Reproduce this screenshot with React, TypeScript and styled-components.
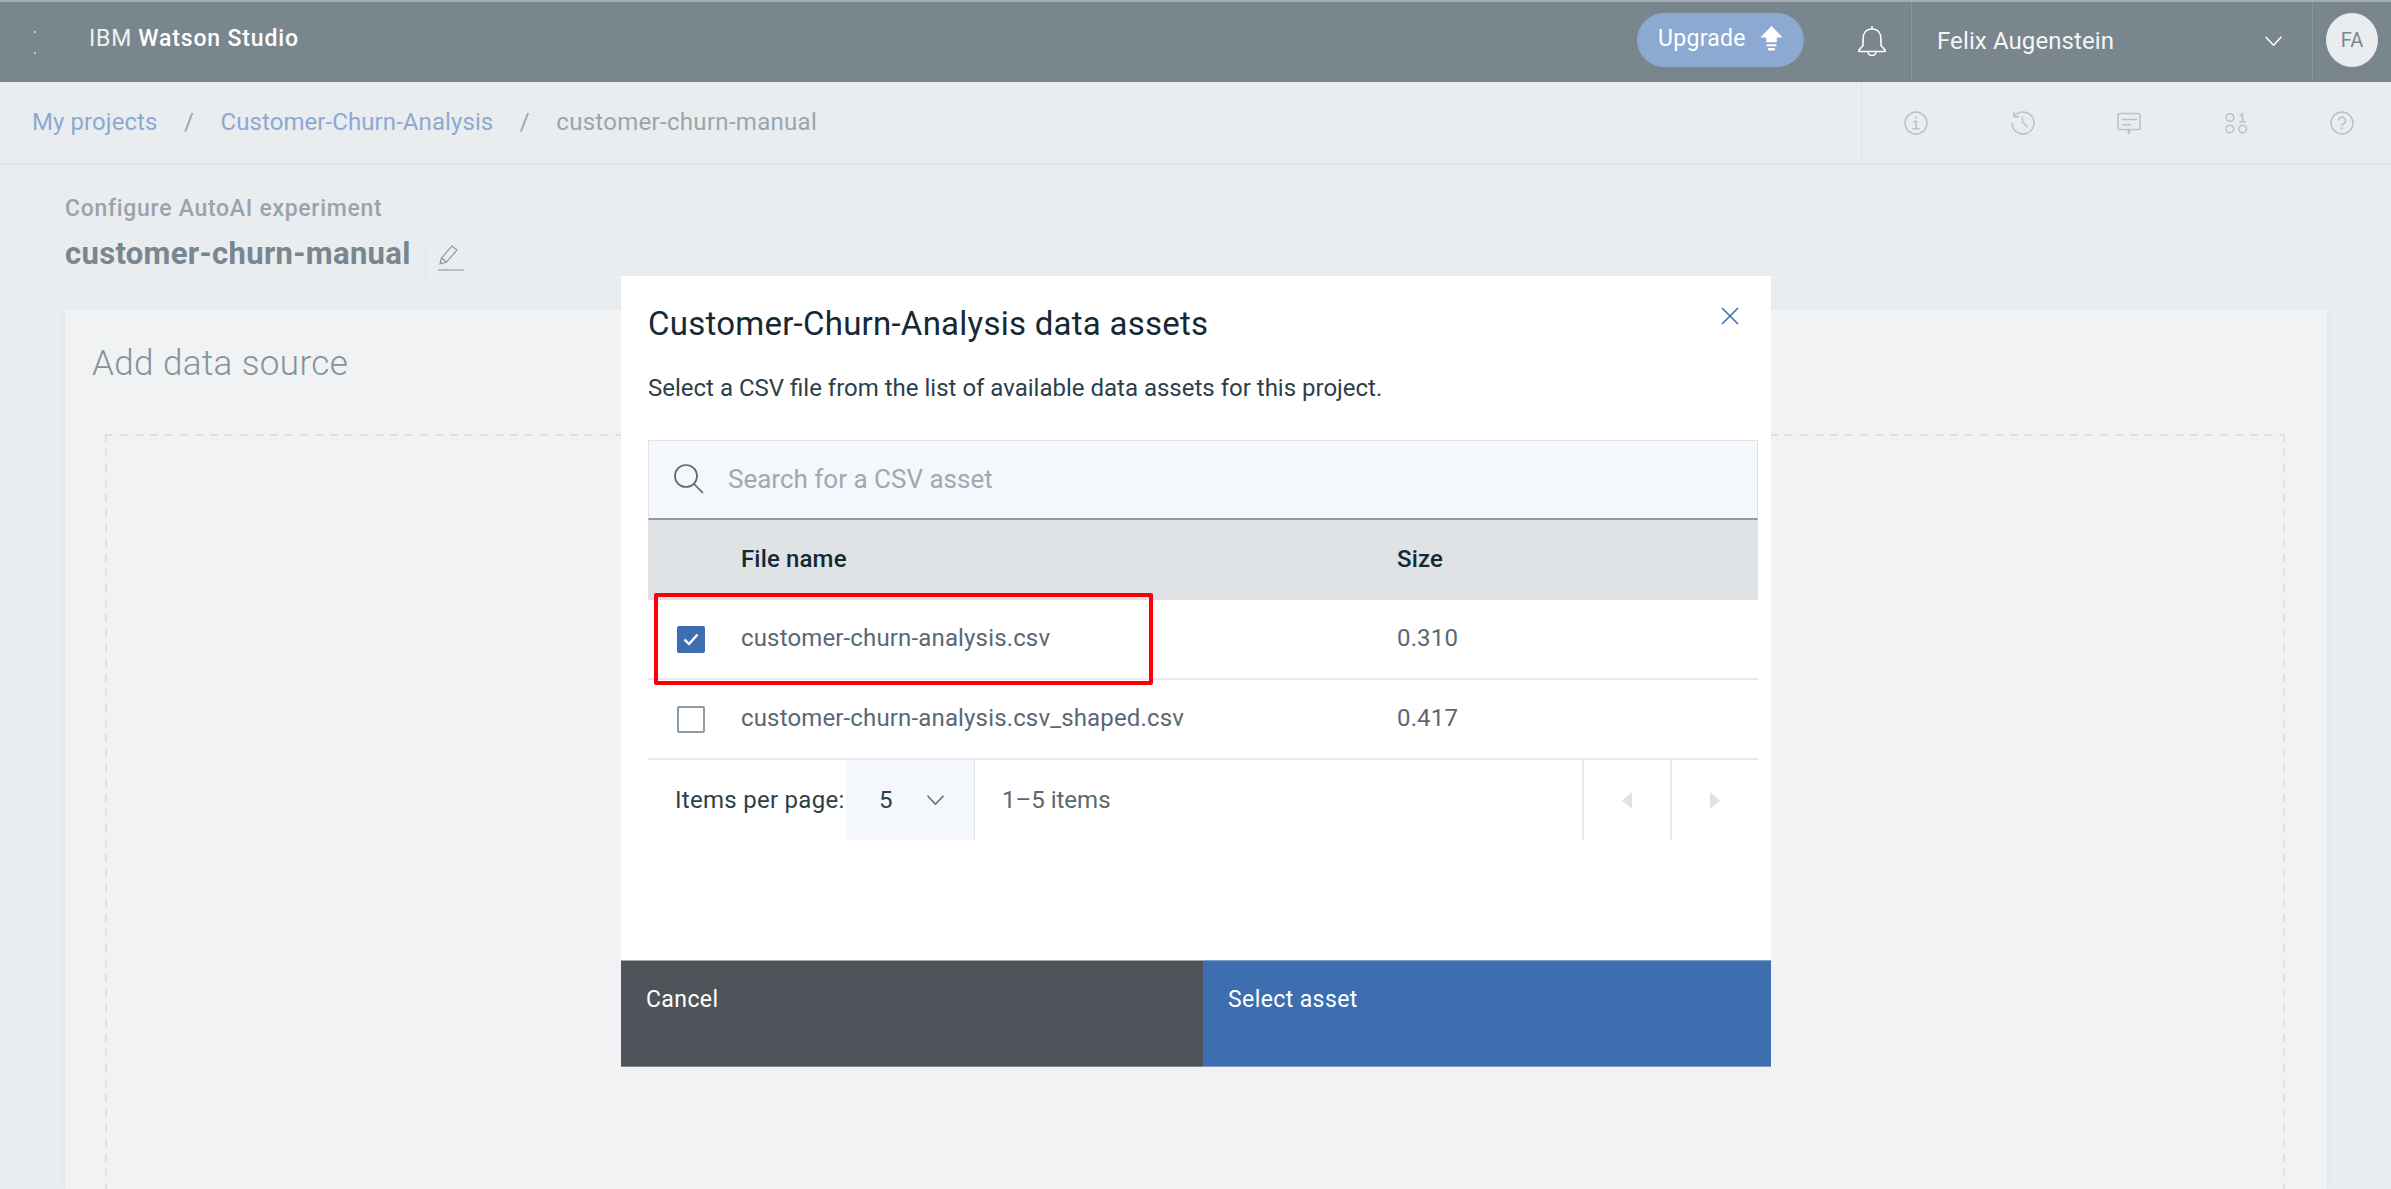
import React from 'react';
import styled, { createGlobalStyle } from 'styled-components';

const GlobalStyle = createGlobalStyle`
  html, body {
    margin: 0;
    padding: 0;
    height: 100%;
    background: #e9edf0;
    font-family: Roboto, "Noto Sans", sans-serif;
  }
  * { box-sizing: border-box; }
`;

const Page = styled.div`
  position: relative;
  height: 1189px;
  overflow: hidden;
  display: flex;
  flex-direction: column;
  background: #e9edf0;
`;

const TopBar = styled.header`
  height: 82px;
  flex: none;
  display: flex;
  align-items: stretch;
  background: #7a868d;
  border-top: 2px solid #a3acb1;
  color: #fff;
`;

const LogoMark = styled.div`
  width: 89px;
  flex: none;
  display: flex;
  flex-direction: column;
  justify-content: center;
  gap: 19px;
  padding-left: 34px;
`;

const LogoDot = styled.span`
  width: 2px;
  height: 2px;
  background: #c4cbcf;
`;

const Brand = styled.div`
  flex: 1;
  display: flex;
  align-items: center;
  gap: 6px;
  font-size: 23px;
  letter-spacing: 0.85px;
  padding-bottom: 8px;
  color: #eef1f2;
`;

const BrandStrong = styled.span`
  font-weight: 500;
  color: #fff;
`;

const Upgrade = styled.div`
  width: 167px;
  height: 54px;
  margin-top: 11px;
  border-radius: 27px;
  background: #8ca9d1;
  display: flex;
  align-items: center;
  gap: 14px;
  padding: 0 0 4px 21px;
  font-size: 23px;
  letter-spacing: 0.3px;
`;

const BellSlot = styled.div`
  width: 107px;
  flex: none;
  display: flex;
  align-items: center;
  justify-content: center;
  padding: 0 0 2px 28px;
`;

const UserMenu = styled.div`
  width: 402px;
  flex: none;
  display: flex;
  align-items: center;
  justify-content: space-between;
  padding: 0 30px 2px 25px;
  font-size: 24px;
  letter-spacing: 0.1px;
  border-left: 1px solid #8a959b;
  border-right: 1px solid #8a959b;
  color: #f3f5f6;
`;

const AvatarSlot = styled.div`
  width: 78px;
  flex: none;
  display: flex;
  align-items: flex-start;
  padding: 11px 0 0 13px;
`;

const Avatar = styled.div`
  width: 52px;
  height: 54px;
  border-radius: 50%;
  background: #e9edf0;
  color: #7a868d;
  display: flex;
  align-items: center;
  justify-content: center;
  font-size: 20px;
`;

const SubBar = styled.nav`
  height: 83px;
  flex: none;
  display: flex;
  justify-content: space-between;
  border-bottom: 2px solid #e1e5e8;
`;

const Crumbs = styled.div`
  display: flex;
  align-items: center;
  padding: 0 0 2px 32px;
  font-size: 24px;
`;

const Crumb = styled.span<{ $link?: boolean }>`
  color: ${(p) => (p.$link ? '#8ea9d0' : '#9aa5ab')};
  letter-spacing: ${(p) => (p.$link ? '0.08px' : '0.3px')};
`;

const CrumbSep = styled.span`
  color: #9aa5ab;
  width: 63px;
  text-align: center;
`;

const ActionRail = styled.div`
  width: 530px;
  display: flex;
  align-items: center;
  justify-content: space-between;
  padding: 0 37px 0 42px;
  border-left: 1px solid #dfe3e6;
`;

const Content = styled.main`
  flex: 1;
  display: flex;
  flex-direction: column;
  padding: 31px 64px 0 65px;
`;

const Eyebrow = styled.div`
  font-size: 23px;
  font-weight: 500;
  line-height: 26px;
  letter-spacing: 0.7px;
  color: #9ba3a8;
`;

const TitleRow = styled.div`
  display: flex;
  align-items: flex-start;
  margin-top: 13px;
  height: 74px;
`;

const PageTitle = styled.h1`
  margin: 0;
  font-size: 31px;
  line-height: 38px;
  font-weight: 700;
  letter-spacing: 0.32px;
  color: #7a868d;
`;

const TitleEdit = styled.div`
  margin: 9px 0 0 14px;
  padding: 1px 0 0 12px;
  height: 37px;
  border-left: 1px solid #dfe3e6;
`;

const Card = styled.section`
  flex: 1;
  background: #f0f2f4;
  box-shadow: 0 1px 5px rgba(90, 104, 114, 0.08);
  padding: 32px 42px 0 28px;
  display: flex;
  flex-direction: column;
`;

const CardTitle = styled.h2`
  margin: 0 0 0 -1px;
  font-size: 35px;
  line-height: 46px;
  font-weight: 300;
  letter-spacing: 0.4px;
  color: #87929a;
`;

const DropZone = styled.div`
  flex: 1;
  margin: 47px 0 0 12px;
  background:
    repeating-linear-gradient(to right, #dde1e5 0 8px, transparent 8px 15px) top / 100% 2px no-repeat,
    repeating-linear-gradient(to bottom, #dde1e5 0 8px, transparent 8px 15px) left / 2px 100% no-repeat,
    repeating-linear-gradient(to bottom, #dde1e5 0 8px, transparent 8px 15px) right / 2px 100% no-repeat;
`;

const Modal = styled.div`
  position: absolute;
  left: 621px;
  top: 276px;
  width: 1150px;
  height: 791px;
  background: #fff;
  display: flex;
  flex-direction: column;
`;

const ModalBody = styled.div`
  flex: 1;
  padding: 0 13px 0 27px;
`;

const ModalTitle = styled.h3`
  margin: 0;
  padding-top: 26px;
  font-size: 33px;
  line-height: 44px;
  font-weight: 400;
  letter-spacing: 0.25px;
  color: #152935;
`;

const ModalText = styled.p`
  margin: 26px 0 0;
  font-size: 24px;
  line-height: 32px;
  color: #2d3f49;
`;

const CloseButton = styled.div`
  position: absolute;
  top: 31px;
  right: 32px;
  width: 18px;
  height: 18px;
  display: flex;
`;

const SearchBox = styled.div`
  margin-top: 36px;
  height: 80px;
  display: flex;
  align-items: center;
  gap: 24px;
  padding: 0 0 2px 25px;
  background: #f4f7fb;
  border: 1px solid #dfe3e6;
  border-bottom: 2px solid #8c9ba5;
  font-size: 26px;
  color: #9ea9b0;
`;

const Row = styled.div<{ $head?: boolean }>`
  height: 80px;
  display: grid;
  grid-template-columns: 93px 656px 1fr;
  align-items: center;
  padding-bottom: 2px;
  font-size: 24px;
  letter-spacing: 0.15px;
  font-weight: ${(p) => (p.$head ? 500 : 400)};
  color: ${(p) => (p.$head ? '#152935' : '#5a6872')};
  background: ${(p) => (p.$head ? '#dfe3e6' : '#fff')};
  border-bottom: ${(p) => (p.$head ? 'none' : '2px solid #e8ebee')};
`;

const CheckCell = styled.div`
  padding: 2px 0 0 29px;
  display: flex;
`;

const CheckBox = styled.span<{ $checked?: boolean }>`
  width: 28px;
  height: 27px;
  border-radius: 2px;
  display: flex;
  align-items: center;
  justify-content: center;
  background: ${(p) => (p.$checked ? '#3c6eb0' : '#fff')};
  border: 2px solid ${(p) => (p.$checked ? '#3c6eb0' : '#8c9ba5')};
`;

const Pager = styled.div`
  height: 80px;
  display: flex;
  align-items: stretch;
  font-size: 24px;
`;

const PagerLabel = styled.div`
  width: 198px;
  padding-left: 27px;
  display: flex;
  align-items: center;
  letter-spacing: 0.28px;
  white-space: nowrap;
  color: #2d3f49;
`;

const PageSelect = styled.div`
  width: 129px;
  background: #f4f7fb;
  border-right: 1px solid #dfe3e6;
  display: flex;
  align-items: center;
  justify-content: space-between;
  padding: 0 30px 0 33px;
  color: #2d3f49;
`;

const PagerRange = styled.div`
  flex: 1;
  padding-left: 27px;
  display: flex;
  align-items: center;
  color: #5a6872;
`;

const PagerButton = styled.div`
  width: 88px;
  display: flex;
  align-items: center;
  justify-content: center;
  border-left: 2px solid #e8ebee;
`;

const Footer = styled.div`
  height: 107px;
  display: flex;
`;

const FooterButton = styled.div<{ $primary?: boolean }>`
  width: ${(p) => (p.$primary ? '568px' : '582px')};
  padding: 24px 25px 0;
  font-size: 23px;
  line-height: 30px;
  letter-spacing: 0.4px;
  color: #fff;
  background: ${(p) => (p.$primary ? '#3c6eb0' : '#4f545b')};
  border-top: 1px solid ${(p) => (p.$primary ? '#7f9fcb' : '#a9acaf')};
  border-bottom: 1px solid ${(p) => (p.$primary ? '#7f9fcb' : '#84878b')};
`;

const Highlight = styled.div`
  position: absolute;
  left: 654px;
  top: 593px;
  width: 499px;
  height: 92px;
  border: 4px solid #fb0007;
  border-radius: 2px;
`;

const iconProps = { fill: 'none', stroke: 'currentColor', strokeWidth: 1.5 };

const ActionIcon = styled.svg`
  width: 24px;
  height: 24px;
  color: #b9c1c6;
`;

const InfoIcon = () => (
  <ActionIcon viewBox="0 0 24 24" {...iconProps}>
    <circle cx="12" cy="12" r="11" />
    <path d="M12 5.500v2M9.500 10.500h2.700v7M8.500 17.700h7" />
  </ActionIcon>
);

const HistoryIcon = () => (
  <ActionIcon viewBox="0 0 24 24" {...iconProps}>
    <path d="M3.500 5A11 11 0 1 1 1 12M3 1.200v4.600h5M11.500 5.500V11l5 5" />
  </ActionIcon>
);

const ChatIcon = () => (
  <ActionIcon viewBox="0 0 24 24" {...iconProps}>
    <path d="M3 2.500h18a2 2 0 0 1 2 2v12a2 2 0 0 1-2 2h-7l-3 4.500 1-4.500H3a2 2 0 0 1-2-2v-12a2 2 0 0 1 2-2zM4.700 8.500H20M4.700 13.800H14" />
  </ActionIcon>
);

const DataIcon = () => (
  <ActionIcon viewBox="0 0 24 24" {...iconProps}>
    <circle cx="6" cy="6.500" r="3.800" />
    <circle cx="6" cy="18" r="3.800" />
    <circle cx="18.700" cy="18" r="3.800" />
    <path d="M15.500 5l3-2v8M15 10.800h6.800" />
  </ActionIcon>
);

const HelpIcon = () => (
  <ActionIcon viewBox="0 0 24 24" {...iconProps}>
    <circle cx="12" cy="12" r="11" />
    <path d="M8.500 9.500a3.500 3.500 0 1 1 5.500 3c-1.300.800-2 1.500-2 2.500M12 16.500v2" />
  </ActionIcon>
);

const Chevron = ({ color }: { color: string }) => (
  <svg width="17" height="10" viewBox="0 0 17 10" fill="none" stroke={color} strokeWidth="1.500">
    <path d="M.5 .8l8 8.400 8-8.400" />
  </svg>
);

const Triangle = ({ flip }: { flip?: boolean }) => (
  <svg width="10" height="17" viewBox="0 0 10 17" fill="#dfe3e6">
    <path d={flip ? 'M0 0l10 8.500L0 17z' : 'M10 0L0 8.500 10 17z'} />
  </svg>
);

const App: React.FC = () => {
  return (
    <Page>
      <GlobalStyle />
      <TopBar>
        <LogoMark>
          <LogoDot />
          <LogoDot />
        </LogoMark>
        <Brand>
          IBM <BrandStrong>Watson Studio</BrandStrong>
        </Brand>
        <Upgrade>
          Upgrade
          <svg width="23" height="25" viewBox="0 0 23 26" fill="#fff">
            <path d="M11.500 0L23 12h-6v5H6v-5H0zM6.500 19h10v2h-10zM8 23h7v2.500H8z" />
          </svg>
        </Upgrade>
        <BellSlot>
          <svg width="30" height="32" viewBox="0 0 30 32" fill="none" stroke="#fff" strokeWidth="1.600">
            <path d="M15 4c-6 0-9 4.500-9 10v6.500L2 25v1.500h26V25l-4-4.500V14c0-5.500-3-10-9-10zM15 1v3M11 26.500a4 4 0 0 0 8 0" />
          </svg>
        </BellSlot>
        <UserMenu>
          Felix Augenstein
          <Chevron color="#fff" />
        </UserMenu>
        <AvatarSlot>
          <Avatar>FA</Avatar>
        </AvatarSlot>
      </TopBar>

      <SubBar>
        <Crumbs>
          <Crumb $link>My projects</Crumb>
          <CrumbSep>/</CrumbSep>
          <Crumb $link>Customer-Churn-Analysis</Crumb>
          <CrumbSep>/</CrumbSep>
          <Crumb>customer-churn-manual</Crumb>
        </Crumbs>
        <ActionRail>
          <InfoIcon />
          <HistoryIcon />
          <ChatIcon />
          <DataIcon />
          <HelpIcon />
        </ActionRail>
      </SubBar>

      <Content>
        <Eyebrow>Configure AutoAI experiment</Eyebrow>
        <TitleRow>
          <PageTitle>customer-churn-manual</PageTitle>
          <TitleEdit>
            <svg width="27" height="26" viewBox="0 0 27 26" fill="none" stroke="#87929a" strokeWidth="1.100">
              <path d="M2 19l1.500-6L14 1l5 4L8.500 17zM3.500 13l5 4M0 25h26" />
            </svg>
          </TitleEdit>
        </TitleRow>
        <Card>
          <CardTitle>Add data source</CardTitle>
          <DropZone />
        </Card>
      </Content>

      <Modal>
        <ModalBody>
          <ModalTitle>Customer-Churn-Analysis data assets</ModalTitle>
          <ModalText>Select a CSV file from the list of available data assets for this project.</ModalText>
          <SearchBox>
            <svg width="30" height="30" viewBox="0 0 30 30" fill="none" stroke="#5a6872" strokeWidth="1.700">
              <circle cx="12" cy="12" r="11" />
              <path d="M20 20l9 9" />
            </svg>
            Search for a CSV asset
          </SearchBox>
          <Row $head>
            <span />
            <span>File name</span>
            <span>Size</span>
          </Row>
          <Row>
            <CheckCell>
              <CheckBox $checked>
                <svg width="16" height="13" viewBox="0 0 16 13" fill="none" stroke="#fff" strokeWidth="2.400">
                  <path d="M1.500 6.500l4.500 4.500 8.500-9.500" />
                </svg>
              </CheckBox>
            </CheckCell>
            <span>customer-churn-analysis.csv</span>
            <span>0.310</span>
          </Row>
          <Row>
            <CheckCell>
              <CheckBox />
            </CheckCell>
            <span>customer-churn-analysis.csv_shaped.csv</span>
            <span>0.417</span>
          </Row>
          <Pager>
            <PagerLabel>Items per page:</PagerLabel>
            <PageSelect>
              5
              <Chevron color="#5a6872" />
            </PageSelect>
            <PagerRange>1–5 items</PagerRange>
            <PagerButton>
              <Triangle />
            </PagerButton>
            <PagerButton>
              <Triangle flip />
            </PagerButton>
          </Pager>
        </ModalBody>
        <CloseButton>
          <svg width="18" height="18" viewBox="0 0 18 18" fill="none" stroke="#3c6eb0" strokeWidth="1.600">
            <path d="M1 1l16 16M17 1L1 17" />
          </svg>
        </CloseButton>
        <Footer>
          <FooterButton>Cancel</FooterButton>
          <FooterButton $primary>Select asset</FooterButton>
        </Footer>
      </Modal>
      <Highlight />
    </Page>
  );
};

export default App;
